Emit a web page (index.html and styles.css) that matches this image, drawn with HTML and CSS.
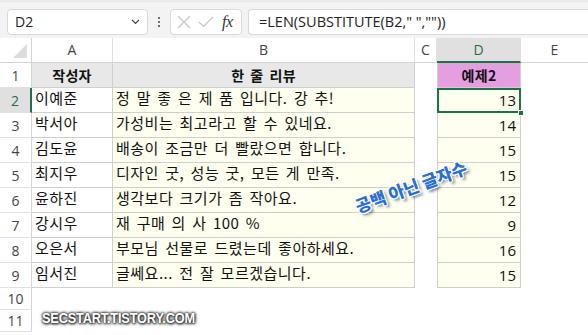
FILE: index.html
```html
<!DOCTYPE html>
<html>
<head>
<meta charset="utf-8">
<link rel="stylesheet" href="styles.css">
</head>
<body>
<div class="fbar">
  <div class="namebox"><span class="nb-text">D2</span>
    <svg class="chev" width="9" height="6" viewBox="0 0 9 6"><path d="M1 1 L4.5 4.5 L8 1" fill="none" stroke="#444" stroke-width="1.2"/></svg>
  </div>
  <div class="dots"><i></i><i></i><i></i></div>
  <div class="fxbox">
    <svg width="14" height="14" viewBox="0 0 14 14"><path d="M1 1 L13 13 M13 1 L1 13" stroke="#c4c4c4" stroke-width="1.2" fill="none"/></svg>
    <svg width="16" height="12" viewBox="0 0 16 12"><path d="M1 6 L5.5 10.5 L15 1" stroke="#c4c4c4" stroke-width="1.2" fill="none"/></svg>
    <span class="fx">fx</span>
  </div>
  <div class="formula">=LEN(SUBSTITUTE(B2," ",""))</div>
</div>
<div class="sheet">
  <div class="corner"><svg width="14" height="14" viewBox="0 0 14 14"><path d="M14 0 L14 14 L0 14 Z" fill="#dcdcdc"/></svg></div>
  <div class="ch">A</div><div class="ch">B</div><div class="ch">C</div><div class="ch ch-sel">D</div><div class="ch ch-last">E</div>

  <div class="rh">1</div><div class="c hd">작성자</div><div class="c hd">한 줄 리뷰</div><div class="gap"></div><div class="c d hd pink">예제2</div><div class="e"></div>
  <div class="rh rh-sel">2</div><div class="c">이예준</div><div class="c y">정 말 좋 은 제 품 입니다. 강 추!</div><div class="gap"></div><div class="c d y num sel">13<span class="handle"></span></div><div class="e"></div>
  <div class="rh">3</div><div class="c">박서아</div><div class="c y">가성비는 최고라고 할 수 있네요.</div><div class="gap"></div><div class="c d y num">14</div><div class="e"></div>
  <div class="rh">4</div><div class="c">김도윤</div><div class="c y">배송이 조금만 더 빨랐으면 합니다.</div><div class="gap"></div><div class="c d y num">15</div><div class="e"></div>
  <div class="rh">5</div><div class="c">최지우</div><div class="c y">디자인 굿, 성능 굿, 모든 게 만족.</div><div class="gap"></div><div class="c d y num">15</div><div class="e"></div>
  <div class="rh">6</div><div class="c">윤하진</div><div class="c y">생각보다 크기가 좀 작아요.</div><div class="gap"></div><div class="c d y num">12</div><div class="e"></div>
  <div class="rh">7</div><div class="c">강시우</div><div class="c y">재 구매 의 사 100 %</div><div class="gap"></div><div class="c d y num">9</div><div class="e"></div>
  <div class="rh">8</div><div class="c">오은서</div><div class="c y">부모님 선물로 드렸는데 좋아하세요.</div><div class="gap"></div><div class="c d y num">16</div><div class="e"></div>
  <div class="rh">9</div><div class="c">임서진</div><div class="c y">글쎄요... 전 잘 모르겠습니다.</div><div class="gap"></div><div class="c d y num">15</div><div class="e"></div>
  <div class="rh short">10</div><div class="blank"></div>
  <div class="rh short">11</div><div class="blank"></div>

  <div class="note">공백 아닌 글자수</div>
  <div class="wm">SECSTART.TISTORY.COM</div>
</div>
</body>
</html>
```
FILE: styles.css
```css
* { box-sizing: border-box; }
html, body { margin: 0; padding: 0; background: #fff; overflow: hidden; }
body { width: 588px; height: 335px; font-family: "Noto Sans CJK KR", "Noto Sans", sans-serif; color: #111; }

.fbar {
  height: 38px;
  background: #f3f3f3;
  border-top: 2px solid #e9e9e9;
  display: flex;
  align-items: center;
  padding: 3px 0 0 7px;
}
.namebox {
  width: 141px; height: 26px;
  background: #fff;
  border: 1px solid #d9d9d9;
  border-radius: 4px;
  display: flex; align-items: center; justify-content: space-between;
  padding: 0 7px 0 7px;
  font-family: "Open Sans", "Noto Sans", sans-serif;
  font-size: 14px; color: #222;
}
.dots { width: 22px; display: flex; flex-direction: column; align-items: center; gap: 2px; }
.dots i { width: 2px; height: 2px; background: #444; display: block; border-radius: 1px; }
.fxbox {
  width: 72px; height: 26px;
  background: #fff;
  border: 1px solid #d9d9d9;
  border-radius: 4px;
  display: flex; align-items: center; gap: 7px;
  padding-left: 6px;
}
.fx { font-family: "Liberation Serif", serif; font-style: italic; font-size: 16px; color: #333; margin-left: 1px; letter-spacing: -0.5px; }
.formula {
  margin-left: 6px;
  flex: 1; height: 26px;
  background: #fff;
  border: 1px solid #d9d9d9;
  border-right: none;
  border-radius: 4px 0 0 4px;
  padding-left: 10px;
  font-family: "Open Sans", "Noto Sans", sans-serif;
  font-size: 14.5px; line-height: 24px; color: #222;
}

.sheet {
  position: relative;
  display: grid;
  grid-template-columns: 32px 81px 302px 22px 84px 67px;
  grid-template-rows: 25px repeat(9, 25px) 22px 22px;
}
.corner { border-right: 1px solid #d4d4d4; border-bottom: 1px solid #d4d4d4; display: flex; align-items: flex-end; justify-content: flex-end; padding: 0 4px 4px 0; }
.ch { border-right: 1px solid #e0e0e0; border-bottom: 1px solid #d4d4d4; text-align: center; font-size: 14px; line-height: 24px; color: #444; font-family: "Open Sans", "Noto Sans", sans-serif; }
.ch-last { border-right: none; }
.ch-sel { background: #e0e0e0; color: #1e7145; border-bottom: 2px solid #1e7145; }
.rh { border-right: 1px solid #d4d4d4; border-bottom: 1px solid #e2e2e2; text-align: center; font-size: 14px; line-height: 26px; color: #444; font-family: "Open Sans", "Noto Sans", sans-serif; grid-column: 1; }
.rh.short { line-height: 22px; }
.rh-sel { background: #e0e0e0; color: #1e7145; border-right: 2px solid #1e7145; }
.blank { grid-column: 2 / 7; }

.c {
  border-right: 1px solid #cfcfcf;
  border-bottom: 1px solid #cfcfcf;
  font-size: 15px; line-height: 20px;
  padding: 0 0 0 3px;
  letter-spacing: 0.5px;
  word-spacing: 2.5px;
  white-space: nowrap; overflow: visible;
}
.d { border-left: 1px solid #cfcfcf; }
.y { background: #fffff0; }
.hd { background: #e8e8e8; font-weight: bold; text-align: center; font-size: 14px; line-height: 24px; padding: 0; letter-spacing: 0.3px; }
.pink { background: #e59ee0; }
.num { text-align: right; padding-right: 4px; font-family: "Open Sans", "Noto Sans", sans-serif; line-height: 25px; letter-spacing: 0; }
.sel { position: relative; outline: 2px solid #1e7145; outline-offset: -2px; }
.handle { position: absolute; right: -4px; bottom: -4px; width: 6px; height: 6px; background: #1e7145; border: 1px solid #fff; }

.note {
  position: absolute;
  left: 360px; top: 155px;
  transform: rotate(-20deg);
  transform-origin: left bottom;
  font-size: 17px; font-weight: 900;
  color: #2b6fd0;
  white-space: nowrap;
  text-shadow: 1px 0 0 #fff, -1px 0 0 #fff, 0 1px 0 #fff, 0 -1px 0 #fff, 1px 1px 0 #fff, -1px -1px 0 #fff, 1px -1px 0 #fff, -1px 1px 0 #fff, 2px 3px 3px rgba(0,0,0,0.55);
}
.wm {
  position: absolute;
  left: 42px; top: 271px;
  font-family: "Liberation Sans", Arial, sans-serif;
  font-size: 15px; font-weight: bold;
  color: #fff;
  letter-spacing: -0.2px;
  transform: scaleX(0.85);
  transform-origin: left center;
  text-shadow: 0 0 2px #333, 0 0 3px #333, 1px 1px 3px #222, 0 0 4px #555;
}
```
